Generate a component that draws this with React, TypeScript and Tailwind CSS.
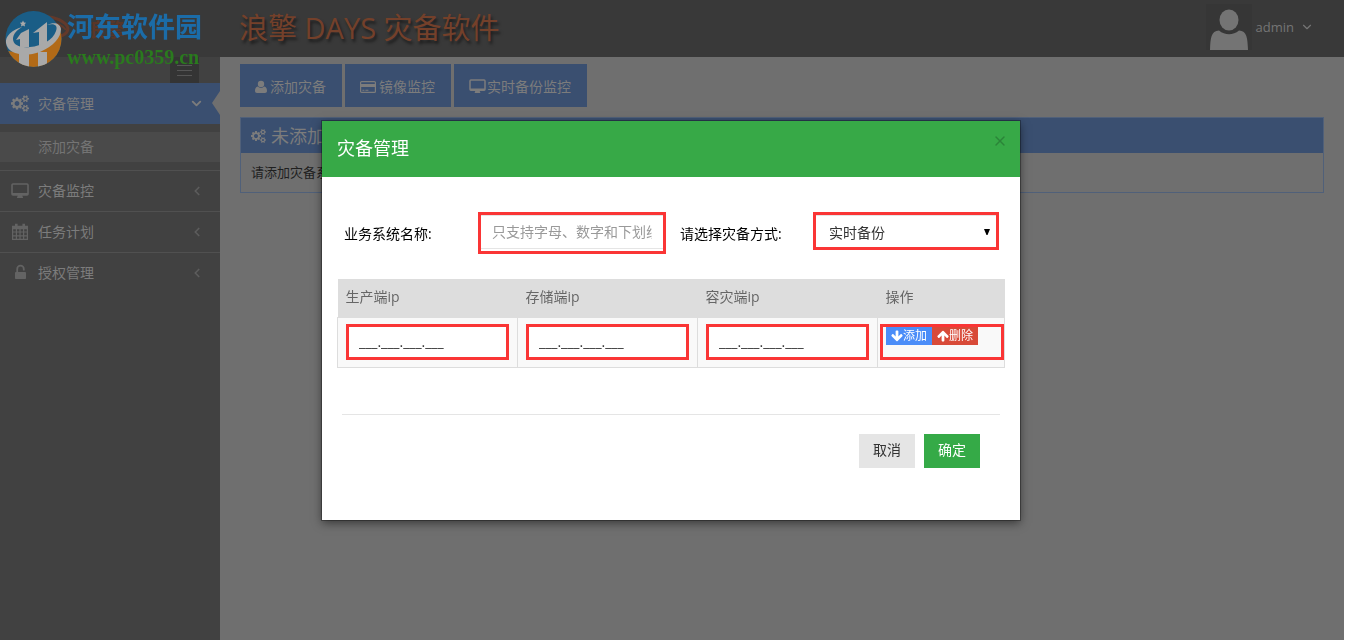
import React from "react";
import { ChevronDown, ChevronLeft, X } from "lucide-react";

type IconProps = { className?: string };

const CogsIcon = ({ className }: IconProps) => (
  <svg viewBox="0 128 1920 1792" fill="currentColor" className={className} aria-hidden="true">
    <path d="M896 1024q0-106-75-181t-181-75-181 75-75 181 75 181 181 75 181-75 75-181zm768 512q0-52-38-90t-90-38-90 38-38 90q0 53 37.5 90.5t90.5 37.5 90.5-37.5 37.5-90.5zm0-1024q0-52-38-90t-90-38-90 38-38 90q0 53 37.5 90.5t90.5 37.5 90.5-37.5 37.5-90.5zm-384 421v185q0 10-7 19.5t-16 10.5l-155 24q-11 35-32 76 34 48 90 115 7 11 7 20 0 12-7 19-23 30-82.5 89.5t-78.5 59.5q-11 0-21-7l-115-90q-37 19-77 31-11 108-23 155-7 24-30 24h-186q-11 0-20-7.5t-10-17.5l-23-153q-34-10-75-31l-118 89q-7 7-20 7-11 0-21-8-144-133-144-160 0-9 7-19 10-14 41-53t47-61q-23-44-35-82l-152-24q-10-1-17-9.5t-7-19.5v-185q0-10 7-19.5t16-10.5l155-24q11-35 32-76-34-48-90-115-7-11-7-20 0-12 7-20 22-30 82-89t79-59q11 0 21 7l115 90q34-18 77-32 11-108 23-154 7-24 30-24h186q11 0 20 7.5t10 17.5l23 153q34 10 75 31l118-89q8-7 20-7 11 0 21 8 144 133 144 160 0 9-7 19-12 16-42 54t-45 60q23 48 34 82l152 23q10 2 17 10.5t7 19.5zm640 533v140q0 16-149 31-12 27-30 52 51 113 51 138 0 4-4 7-122 71-124 71-8 0-46-47t-52-68q-20 2-30 2t-30-2q-14 21-52 68t-46 47q-2 0-124-71-4-3-4-7 0-25 51-138-18-25-30-52-149-15-149-31v-140q0-16 149-31 13-29 30-52-51-113-51-138 0-4 4-7 4-2 35-20t59-34 30-16q8 0 46 46.5t52 67.5q20-2 30-2t30 2q51-71 92-112l6-2q4 0 124 70 4 3 4 7 0 25-51 138 17 23 30 52 149 15 149 31zm0-1024v140q0 16-149 31-12 27-30 52 51 113 51 138 0 4-4 7-122 71-124 71-8 0-46-47t-52-68q-20 2-30 2t-30-2q-14 21-52 68t-46 47q-2 0-124-71-4-3-4-7 0-25 51-138-18-25-30-52-149-15-149-31v-140q0-16 149-31 13-29 30-52-51-113-51-138 0-4 4-7 4-2 35-20t59-34 30-16q8 0 46 46.5t52 67.5q20-2 30-2t30 2q51-71 92-112l6-2q4 0 124 70 4 3 4 7 0 25-51 138 17 23 30 52 149 15 149 31z" />
  </svg>
);

const DesktopIcon = ({ className }: IconProps) => (
  <svg viewBox="0 0 18 16" className={className} aria-hidden="true">
    <rect x="1" y="1" width="16" height="11" rx="1" fill="none" stroke="currentColor" strokeWidth="1.6" />
    <path d="M1 10h16v2H1zM7 12h4l1 2.4v.6H6v-.6z" fill="currentColor" />
  </svg>
);

const CalendarIcon = ({ className }: IconProps) => (
  <svg viewBox="0 0 18 18" className={className} aria-hidden="true">
    <path
      d="M1.6 3.4h14.8v13H1.6zM1 5.6h16M1.6 9h14.8M1.6 12.8h14.8M5.4 6v10.4M9 6v10.4M12.6 6v10.4"
      fill="none"
      stroke="currentColor"
      strokeWidth="1.2"
    />
    <path d="M1.6 3h14.8v3H1.6zM4 .8h2.6v4H4zM11.4.8H14v4h-2.6z" fill="currentColor" />
  </svg>
);

const UnlockIcon = ({ className }: IconProps) => (
  <svg viewBox="0 0 18 18" className={className} aria-hidden="true">
    <path d="M6.2 9V5a3.300 3.300 0 0 1 6.600 0v1.400" fill="none" stroke="currentColor" strokeWidth="1.800" />
    <rect x="4" y="8" width="11" height="7" rx="0.800" fill="currentColor" />
  </svg>
);

const UserIcon = ({ className }: IconProps) => (
  <svg viewBox="0 0 12 14" fill="currentColor" className={className} aria-hidden="true">
    <circle cx="6" cy="4" r="3.200" />
    <path d="M2.800 6.600a4.600 4.600 0 0 0 6.400 0C11.200 7 12 8.800 12 11c0 1.300-.8 2-2 2H2c-1.200 0-2-.7-2-2 0-2.200.8-4 2.800-4.400z" />
  </svg>
);

const CardIcon = ({ className }: IconProps) => (
  <svg viewBox="0 0 16 14" className={className} aria-hidden="true">
    <rect x="0.600" y="1.600" width="14.800" height="10.800" rx="1" fill="none" stroke="currentColor" strokeWidth="1.200" />
    <path d="M1 4h14v3H1zM2.400 9.800h2v1h-2zM5.400 9.800h3v1h-3z" fill="currentColor" />
  </svg>
);

const ArrowIcon = ({ className }: IconProps) => (
  <svg viewBox="64 64 1664 1664" fill="currentColor" className={className} aria-hidden="true">
    <path d="M1675 832q0 53-37 90l-651 652q-39 37-91 37-53 0-90-37l-651-652q-38-36-38-90 0-53 38-91l74-75q39-37 91-37 53 0 90 37l294 294v-704q0-52 38-90t90-38h128q52 0 90 38t38 90v704l294-294q37-37 90-37 52 0 91 37l75 75q37 39 37 91z" />
  </svg>
);

const Watermark = () => (
  <div className="pointer-events-none absolute left-0 top-0 z-10 flex items-start gap-1 pl-1 pt-[9px]">
    <svg viewBox="4 9 59 59" className="size-[59px] shrink-0" aria-hidden="true">
      <defs>
        <clipPath id="disc">
          <circle cx="33.500" cy="39" r="28" />
        </clipPath>
      </defs>
      <g clipPath="url(#disc)">
        <rect x="4" y="9" width="59" height="59" fill="#1a5d86" />
        <path d="M4 50C24 56 46 48 63 30v38H4z" fill="#b26a17" />
        <path d="M19 54h10v14H19zM38 52h9v16h-9z" fill="#a9a9a9" />
        <path d="M16 40l5-7 8-4v18h-9v-8zM33 33l14-11v22l-8 3V32z" fill="#a9a9a9" />
        <path d="M23 20.500l1 2 2.200.3-1.600 1.500.4 2.200-2-1-2 1 .4-2.200-1.600-1.500 2.200-.3z" fill="#a9a9a9" />
      </g>
      <path
        d="M22 27C12 30 5 36 6 43c2 12 19 14 34 9 14-6 21-15 21-23-1-6-7-7-14-4 8-2 11 1 9 6-3 9-14 15-26 16-10 1-17-2-17-8 0-5 4-9 9-12z"
        fill="#a9a9a9"
      />
    </svg>
    <div className="font-bold">
      <p className="h-[36px] whitespace-nowrap text-[27px] leading-9 text-[#1b6ca8]">河东软件园</p>
      <p className="font-['Liberation_Serif',serif] text-[20px] leading-6 text-[#2a7a1e]">www.pc0359.cn</p>
    </div>
  </div>
);

const Header = () => (
  <header className="flex h-[57px] shrink-0 justify-between bg-[#393939] pr-[30px]">
    <div className="flex h-full">
      <div className="flex h-full w-[239px] items-center">
        {/* product logo under the site mark */}
        <svg viewBox="0 0 130 50" className="ml-6 h-[50px] w-[130px]" aria-hidden="true">
          <ellipse cx="24" cy="23" rx="20" ry="10" fill="none" stroke="#63392a" strokeWidth="3" transform="rotate(8 24 23)" />
          <path d="M10 28C18 16 34 16 42 26" fill="none" stroke="#63392a" strokeWidth="2" />
          <text x="62" y="33" fill="#5a3628" fontSize="19" fontWeight="bold">浪擎</text>
        </svg>
      </div>
      <h1 className="text-[29px] leading-[56px] text-[#74402a] [text-shadow:2px_3px_3px_rgba(0,0,0,0.5)]">浪擎 DAYS 灾备软件</h1>
    </div>
    <button type="button" className="flex h-[54px] items-center text-[13px] text-[#757575]">
      <svg viewBox="0 0 46 46" className="size-[46px]" aria-hidden="true">
        <rect width="46" height="46" fill="#363636" />
        <ellipse cx="23" cy="16" rx="9.500" ry="10.500" fill="#747474" />
        <path d="M4 46c.5-12 1-19 9-19.500 6 5 14 5 20 0 8 .5 8.500 7.500 9 19.500z" fill="#747474" />
      </svg>
      <span className="ml-1 mr-[6px]">admin</span>
      <ChevronDown size={14} />
    </button>
  </header>
);

const menu = [
  { label: "灾备监控", icon: DesktopIcon },
  { label: "任务计划", icon: CalendarIcon },
  { label: "授权管理", icon: UnlockIcon },
];

const Sidebar = () => (
  <nav className="w-[220px] shrink-0 bg-[#414141] text-[#7c7c7c]">
    <div className="flex justify-end pr-[21px]">
      <button type="button" aria-label="菜单" className="flex h-[26px] w-[29px] flex-col items-center justify-center gap-1 bg-[#343434]">
        <span className="h-px w-[15px] bg-[#555]" />
        <span className="h-px w-[15px] bg-[#555]" />
        <span className="h-px w-[15px] bg-[#555]" />
      </button>
    </div>
    <a href="#" className="relative flex h-[41px] items-center bg-[#3a4f70] pl-[11px] pr-4">
      <CogsIcon className="mr-[9px] h-[17px] w-[18px]" />
      <span className="flex-1">灾备管理</span>
      <ChevronDown size={15} strokeWidth={3} />
      <span className="absolute right-0 top-2 border-y-[12px] border-r-8 border-y-transparent border-r-[#6f6f6f]" />
    </a>
    <div className="py-2">
      <a href="#" className="flex h-[30px] items-center bg-[#4a4a4a] pl-[38px] text-[#747474]">添加灾备</a>
    </div>
    {menu.map(({ label, icon: Icon }) => (
      <a key={label} href="#" className="flex h-[41px] items-center border-t border-[#505050] pl-[11px] pr-4">
        <Icon className="mr-[9px] size-[18px] text-[#636363]" />
        <span className="flex-1">{label}</span>
        <ChevronLeft size={14} strokeWidth={3} className="text-[#5c5c5c]" />
      </a>
    ))}
  </nav>
);

const tools = [
  { label: "添加灾备", icon: UserIcon, size: "h-[14px] w-[12px] mr-[3px]" },
  { label: "镜像监控", icon: CardIcon, size: "h-[14px] w-[16px] mr-[3px]" },
  { label: "实时备份监控", icon: DesktopIcon, size: "h-[15px] w-[17px] mr-px" },
];

const Content = () => (
  <main className="min-w-0 flex-1 bg-[#6f6f6f] px-5 pt-[7px]">
    <div className="flex gap-[3px]">
      {tools.map(({ label, icon: Icon, size }) => (
        <button key={label} type="button" className="flex h-[43px] items-center bg-[#3a4f70] pl-[15px] pr-4 pt-[2px] text-[#7c7c7c]">
          <Icon className={size} />
          {label}
        </button>
      ))}
    </div>
    <section className="mt-[10px] border border-[#506079]">
      <h2 className="flex h-[35px] items-center gap-[5px] bg-[#3a4f70] px-[10px] text-lg text-[#7c7c7c]">
        <CogsIcon className="h-[14px] w-[15px]" />
        未添加灾备系统
      </h2>
      <p className="px-[10px] pb-[10px] pt-[9px] text-[13px] leading-5 text-[#1f1f1f]">请添加灾备系统</p>
    </section>
  </main>
);

const ipColumns = ["生产端ip", "存储端ip", "容灾端ip"];

const Dialog = () => (
  <div className="fixed inset-0 flex items-start justify-center pr-[3px] pt-[121px]">
    <div
      role="dialog"
      aria-labelledby="dialog-title"
      className="w-full max-w-[698px] bg-white pb-[52px] shadow-[0_0_0_1px_rgba(0,0,0,0.3),0_3px_9px_rgba(0,0,0,0.5)]"
    >
      <div className="flex h-14 items-start justify-between bg-[#37a947] pl-[15px] pr-3">
        <h3 id="dialog-title" className="text-lg leading-[54px] text-white">灾备管理</h3>
        <button type="button" aria-label="关闭" className="mt-3 text-[#2b8438]">
          <X size={16} strokeWidth={2} />
        </button>
      </div>
      <form className="px-[15px] pt-[35px]">
        <div className="flex items-start pl-[7px] pr-[6px] text-black">
          <label htmlFor="system-name" className="w-[134px] leading-[44px]">业务系统名称:</label>
          <div className="h-[42px] w-[188px] border-3 border-[#fa3535]">
            <input
              id="system-name"
              type="text"
              placeholder="只支持字母、数字和下划线"
              className="block h-[34px] w-full border-y border-[#e5e5e5] px-[11px] pb-[2px] placeholder:text-[#999]"
            />
          </div>
          <label htmlFor="backup-mode" className="ml-[14px] flex-1 leading-[44px]">请选择灾备方式:</label>
          <div className="relative h-[38px] w-[186px] border-3 border-[#fa3535]">
            <select id="backup-mode" className="block h-8 w-full appearance-none border-t border-[#e5e5e5] bg-white pl-[13px] pt-[2px] text-[#333]">
              <option>实时备份</option>
            </select>
            <svg viewBox="0 0 6 6" className="pointer-events-none absolute right-[6px] top-[14px] size-[6px]" aria-hidden="true">
              <path d="M0 0h6L3.500 6h-1z" fill="#000" />
            </svg>
          </div>
        </div>

        <table className="mt-[23px] w-full table-fixed border-collapse">
          <thead>
            <tr className="h-[38px] bg-[#ddd] text-left text-[#666]">
              {ipColumns.map((name) => (
                <th key={name} className="w-[180px] px-2 pb-[2px] font-normal">{name}</th>
              ))}
              <th className="px-2 pb-[2px] font-normal">操作</th>
            </tr>
          </thead>
          <tbody>
            <tr className="h-[50px] bg-[#f9f9f9] align-top">
              {ipColumns.map((name) => (
                <td key={name} className="border border-[#ddd] px-2 pt-[6px]">
                  <input
                    type="text"
                    aria-label={name}
                    defaultValue="___.___.___.___"
                    className="block h-9 w-full border-3 border-[#fa3535] bg-white px-[10px] text-[#333]"
                  />
                </td>
              ))}
              <td className="border border-[#ddd] pl-[2px] pt-[6px]">
                <div className="flex h-9 items-start border-3 border-[#fa3535] pl-[3px] text-xs text-white">
                  <button type="button" className="flex h-[18px] items-center bg-[#4b8df8] px-[5px]">
                    <ArrowIcon className="size-3" />
                    添加
                  </button>
                  <button type="button" className="flex h-[18px] items-center bg-[#d84a38] px-[5px]">
                    <ArrowIcon className="size-3 rotate-180" />
                    删除
                  </button>
                </div>
              </td>
            </tr>
          </tbody>
        </table>

        <div className="mx-[5px] mt-[46px] flex justify-end gap-[9px] border-t border-[#e5e5e5] pr-5 pt-[19px]">
          <button type="button" className="h-[34px] w-14 bg-[#e5e5e5] pb-px text-[#333]">取消</button>
          <button type="submit" className="h-[34px] w-14 bg-[#35aa47] pb-px text-white">确定</button>
        </div>
      </form>
    </div>
  </div>
);

export default function App() {
  return (
    <div className="relative flex min-h-screen flex-col border-r border-white font-['Open_Sans','Noto_Sans_CJK_SC',sans-serif] text-sm">
      <Watermark />
      <Header />
      <div className="flex flex-1">
        <Sidebar />
        <Content />
      </div>
      <Dialog />
    </div>
  );
}
